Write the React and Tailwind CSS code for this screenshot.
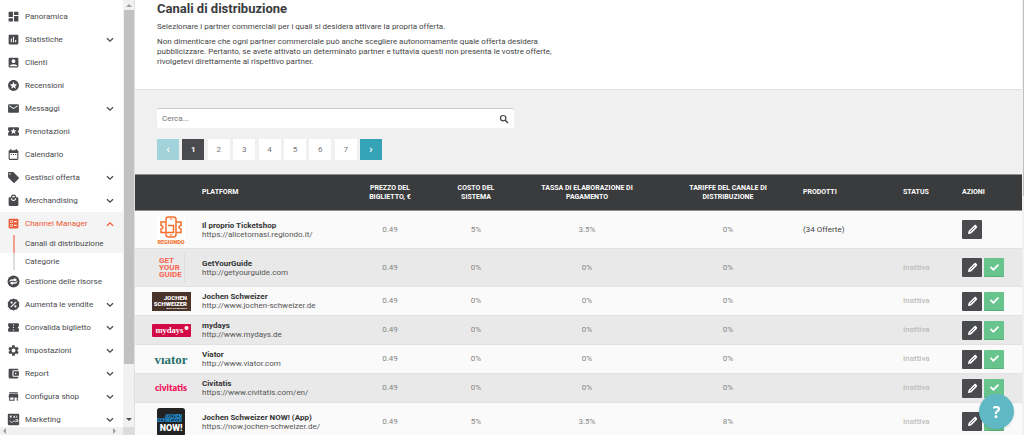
import React from "react";
import clsx from "clsx";
import {
  MdDashboard,
  MdAssessment,
  MdAccountBox,
  MdStars,
  MdEmail,
  MdLocalActivity,
  MdDateRange,
  MdLocalOffer,
  MdLocalMall,
  MdBallot,
  MdConfirmationNumber,
  MdSettings,
  MdAccountBalanceWallet,
  MdStore,
} from "react-icons/md";
import { FaCheck } from "react-icons/fa";

const ResourcesIcon = ({ className }) => (
  <svg viewBox="0 0 24 24" className={className}>
    <circle cx="12" cy="12" r="11" fill="currentColor" />
    <path d="M4.500 13c0-3 2-5 5-5h4V5l5 4.200-5 4V10.800h-4c-2 0-3 .5-5 2.200z" fill="#fff" />
    <path d="M19.500 11c0 3-2 5-5 5h-4v3l-5-4.200 5-4v2.400h4c2 0 3-.5 5-2.200z" fill="#fff" />
    <path d="M7 12h10" stroke="currentColor" strokeWidth="1.200" />
  </svg>
);

const DiscountIcon = ({ className }) => (
  <svg viewBox="0 0 24 24" className={className}>
    <path
      d="M12 .8l3 1.600 3.400.2 1.500 3 2.700 2.200L22.200 12l.4 4.200-2.700 2.200-1.500 3-3.400.2-3 1.600-3-1.600-3.400-.2-1.500-3-2.700-2.200.4-4.200-.4-4.200 2.700-2.200 1.500-3 3.400-.2z"
      fill="currentColor"
    />
    <path d="M7 17L17 7" stroke="#fff" strokeWidth="2" />
    <circle cx="8.500" cy="8.500" r="2" fill="#fff" />
    <circle cx="15.500" cy="15.500" r="2" fill="#fff" />
  </svg>
);

const MarketingIcon = ({ className }) => (
  <svg viewBox="0 0 24 24" className={className}>
    <rect x="1.500" y="1.500" width="21" height="21" rx="2" fill="currentColor" />
    <path d="M5 6h4M7 4.500v5M12 5l3 4M15 5l-3 4M18 5v4M5 14l4 4 4-4 3 3 4-4M15.500 12.500H20V17" fill="none" stroke="#fff" strokeWidth="1.500" />
  </svg>
);

const Chevron = ({ up }) => (
  <svg viewBox="0 0 8 6" className={clsx("w-2 h-1.5 shrink-0", up && "rotate-180")}>
    <path d="M1 1.200l3 3 3-3" fill="none" stroke="currentColor" strokeWidth="1.300" />
  </svg>
);

const PencilIcon = () => (
  <svg viewBox="0 0 24 24" className="w-[11px] h-[11px]">
    <path d="M2 22l1.500-7L15.500 3c1.500-1.500 3-1.500 4.200-.2l1.500 1.500c1.300 1.200 1.300 2.700-.2 4.200L9 20.500z" fill="#fff" />
    <path d="M7 17L17 7" stroke="#4a4b4f" strokeWidth="1.800" />
  </svg>
);

const menuBefore = [
  { label: "Panoramica", icon: MdDashboard },
  { label: "Statistiche", icon: MdAssessment, more: true },
  { label: "Clienti", icon: MdAccountBox },
  { label: "Recensioni", icon: MdStars },
  { label: "Messaggi", icon: MdEmail, more: true },
  { label: "Prenotazioni", icon: MdLocalActivity },
  { label: "Calendario", icon: MdDateRange },
  { label: "Gestisci offerta", icon: MdLocalOffer, more: true },
  { label: "Merchandising", icon: MdLocalMall, more: true },
];

const menuAfter = [
  { label: "Gestione delle risorse", icon: ResourcesIcon },
  { label: "Aumenta le vendite", icon: DiscountIcon, more: true },
  { label: "Convalida biglietto", icon: MdConfirmationNumber, more: true },
  { label: "Impostazioni", icon: MdSettings, more: true },
  { label: "Report", icon: MdAccountBalanceWallet, more: true },
  { label: "Configura shop", icon: MdStore, more: true },
  { label: "Marketing", icon: MarketingIcon, more: true },
];

const MenuItem = ({ label, icon: Icon, more, active }) => (
  <a
    href="#"
    className={clsx(
      "flex items-center h-[23px] pl-[7px] pr-[9px]",
      active ? "text-[#ee5a36]" : "text-[#48494c]"
    )}
  >
    <Icon className="w-[13px] h-[13px] shrink-0 mr-[5px]" />
    <span className="flex-1 whitespace-nowrap">{label}</span>
    {more && <Chevron up={active} />}
  </a>
);

const Sidebar = () => (
  <aside className="flex h-full shrink-0 border-r border-[#e0e0e0]">
    <div className="flex flex-col w-[123px]">
      <nav className="flex-1 overflow-hidden pt-[5px] text-[8px]">
        {menuBefore.map((item) => (
          <MenuItem key={item.label} {...item} />
        ))}
        <div className="bg-[#f4f4f4]">
          <MenuItem label="Channel Manager" icon={MdBallot} more active />
        </div>
        <a href="#" className="flex items-center h-[18px] pl-[13px] bg-[#f4f4f4] text-[#48494c]">
          <span className="w-0.5 h-full bg-[#f0a08c] mr-2.5" />
          Canali di distribuzione
        </a>
        <a href="#" className="flex items-center h-[17px] pl-[13px] text-[#48494c]">
          <span className="w-0.5 h-full bg-[#dedede] mr-2.5" />
          Categorie
        </a>
        {menuAfter.map((item) => (
          <MenuItem key={item.label} {...item} />
        ))}
      </nav>
      <div className="flex items-center justify-between h-2 px-0.5 bg-[#f1f1f1] text-[#a0a0a0]">
        <svg viewBox="0 0 4 6" className="w-1 h-1.5"><path d="M4 0v6L1 3z" fill="currentColor" /></svg>
        <svg viewBox="0 0 4 6" className="w-1 h-1.5 mr-1"><path d="M0 0v6l3-3z" fill="currentColor" /></svg>
      </div>
    </div>
    {/* Scrollbar */}
    <div className="flex flex-col items-center w-[11px] bg-[#f1f1f1]">
      <svg viewBox="0 0 6 4" className="w-1.5 h-1 my-[3px] shrink-0"><path d="M0 4h6L3 1z" fill="#a0a0a0" /></svg>
      <div className="w-[10px] basis-[70px] grow-[70] bg-[#c1c1c1]" />
      <div className="basis-[52px] shrink-0" />
      <svg viewBox="0 0 6 4" className="w-1.5 h-1 my-0.5 shrink-0"><path d="M0 0h6L3 3z" fill="#505050" /></svg>
      <div className="w-full h-2 mt-[3px] bg-[#dcdcdc] shrink-0" />
    </div>
  </aside>
);

const RegiondoLogo = () => (
  <svg viewBox="0 0 28 28" className="w-7 h-7 mx-auto">
    <rect width="28" height="28" fill="#fff" />
    <g fill="none" stroke="#f4702c" strokeWidth="1.500">
      <rect x="9" y="1" width="10" height="20" rx="2.500" />
      <path d="M9 6H4v3.500c1.500.3 2 .8 2 1.700s-.5 1.400-2 1.700v3.600h12.500v-7H11M19 6h5v3.500c-1.500.3-2 .8-2 1.700s.5 1.400 2 1.700v3.600h-5" />
      <path d="M12.500 3h3M12.500 19h3" strokeWidth="1" />
    </g>
    <text x="14" y="27.500" textAnchor="middle" fontSize="5.500" fontWeight="900" fontFamily="Roboto, sans-serif" fill="#f4702c">REGIONDO</text>
  </svg>
);

const GetYourGuideLogo = () => (
  <svg viewBox="0 0 28 28" className="w-7 h-7 mx-auto">
    <g fontSize="8" fontWeight="700" fontFamily="Roboto, sans-serif" fill="#fa6450">
      <text x="2" y="9">GET</text>
      <text x="2" y="16">YOUR</text>
      <text x="2" y="23">GUIDE</text>
    </g>
    <path d="M27.500 0v28" stroke="#dcdcdc" />
  </svg>
);

const JochenLogo = () => (
  <svg viewBox="0 0 39 19" className="w-[39px] h-[19px] mx-auto">
    <rect width="39" height="19" fill="#4a3328" />
    <g fontWeight="900" fontFamily="Roboto, sans-serif" fill="#fff" textAnchor="end">
      <text x="35" y="8" fontSize="6">JOCHEN</text>
      <text x="35" y="13.500" fontSize="6">SCHWEIZER</text>
      <text x="35" y="17" fontSize="2.500">WAS DU ERLEBST</text>
    </g>
  </svg>
);

const MydaysLogo = () => (
  <svg viewBox="0 0 39 13" className="w-[39px] h-[13px] mx-auto">
    <rect width="39" height="13" rx="1" fill="#d20a46" />
    <text x="3.500" y="8.500" fontSize="8.500" fontWeight="700" fontFamily="'Liberation Serif', serif" fill="#fff">mydays</text>
    <circle cx="34.500" cy="4" r="2" fill="#fff" />
  </svg>
);

const ViatorLogo = () => (
  <svg viewBox="0 0 39 14" className="w-[39px] h-[14px] mx-auto">
    <text x="19" y="11.500" textAnchor="middle" fontSize="13" fontWeight="700" fontFamily="'Liberation Serif', serif" fill="#28706c">vıator</text>
  </svg>
);

const CivitatisLogo = () => (
  <svg viewBox="0 0 39 14" className="w-[39px] h-[14px] mx-auto">
    <text x="19" y="10" textAnchor="middle" fontSize="9" fontWeight="800" fontFamily="Lato, sans-serif" fill="#f0145a">civitatis</text>
  </svg>
);

const JochenNowLogo = () => (
  <svg viewBox="0 0 28 28" className="w-7 h-7 mx-auto">
    <rect width="28" height="28" rx="2.500" fill="#222" />
    <g fontWeight="900" fontFamily="Roboto, sans-serif" textAnchor="end">
      <text x="25" y="9.500" fontSize="4.500" fill="#1e9ce0">JOCHEN</text>
      <text x="25" y="13.800" fontSize="4.500" fill="#1e9ce0">SCHWEIZER</text>
      <text x="25.500" y="22.500" fontSize="9" fill="#fff">NOW!</text>
    </g>
  </svg>
);

const platforms = [
  { logo: RegiondoLogo, name: "Il proprio Ticketshop", url: "https://alicetomasi.regiondo.it/", system: "5%", payment: "3.5%", channel: "0%", products: "(34 Offerte)", tall: true },
  { logo: GetYourGuideLogo, name: "GetYourGuide", url: "http://getyourguide.com", system: "0%", payment: "0%", channel: "0%", status: "Inattiva", tall: true },
  { logo: JochenLogo, name: "Jochen Schweizer", url: "http://www.jochen-schweizer.de", system: "0%", payment: "0%", channel: "0%", status: "Inattiva" },
  { logo: MydaysLogo, name: "mydays", url: "http://www.mydays.de", system: "0%", payment: "0%", channel: "0%", status: "Inattiva" },
  { logo: ViatorLogo, name: "Viator", url: "http://www.viator.com", system: "0%", payment: "0%", channel: "0%", status: "Inattiva" },
  { logo: CivitatisLogo, name: "Civitatis", url: "https://www.civitatis.com/en/", system: "0%", payment: "0%", channel: "0%", status: "Inattiva" },
  { logo: JochenNowLogo, name: "Jochen Schweizer NOW! (App)", url: "https://now.jochen-schweizer.de/", system: "5%", payment: "3.5%", channel: "8%", status: "Inattiva", tall: true },
];

const PlatformTable = () => (
  <table className="w-full table-fixed text-[8px] text-[#858585]">
    <colgroup>
      <col className="w-[67px]" />
      <col />
      <col className="w-[88px]" />
      <col className="w-[84px]" />
      <col className="w-[138px]" />
      <col className="w-[144px]" />
      <col className="w-[100px]" />
      <col className="w-[59px]" />
      <col className="w-[63px]" />
    </colgroup>
    <thead className="bg-[#3a3b3d] text-white text-[7px] leading-[9px]">
      <tr className="h-9 border-y border-[#8f8f8f]">
        <th aria-label="Logo" />
        <th className="text-left">PLATFORM</th>
        <th>PREZZO DEL<br />BIGLIETTO, €</th>
        <th>COSTO DEL<br />SISTEMA</th>
        <th>TASSA DI ELABORAZIONE DI<br />PAGAMENTO</th>
        <th>TARIFFE DEL CANALE DI<br />DISTRIBUZIONE</th>
        <th className="text-left pl-[3px]">PRODOTTI</th>
        <th className="text-left pl-[3px]">STATUS</th>
        <th className="text-left pl-[3px]">AZIONI</th>
      </tr>
    </thead>
    <tbody className="text-center">
      {platforms.map(({ logo: Logo, ...row }) => (
        <tr
          key={row.name}
          className={clsx(
            "odd:bg-[#fafafa] even:bg-[#e9e9e9] border-b border-[#e2e2e2]",
            row.tall ? "h-[38px]" : "h-[29px]"
          )}
        >
          <td className="pr-0 pl-[5px]"><Logo /></td>
          <td className="text-left leading-[9px] whitespace-nowrap">
            <div className="font-bold text-[#333]">{row.name}</div>
            <a href={row.url} className="text-[#555]">{row.url}</a>
          </td>
          <td>0.49</td>
          <td>{row.system}</td>
          <td>{row.payment}</td>
          <td>{row.channel}</td>
          <td className="text-left pl-[3px] text-[#444]">{row.products}</td>
          <td className="text-left pl-[3px] font-medium text-[#bdbdbd]">{row.status}</td>
          <td className="pl-[3px]">
            <div className="flex gap-0.5">
              <button aria-label="Modifica" className="flex items-center justify-center w-5 h-[19px] rounded-[1px] bg-[#4a4b4f]">
                <PencilIcon />
              </button>
              {row.status && (
                <button aria-label="Attiva" className="flex items-center justify-center w-5 h-[19px] rounded-[1px] bg-[#68c48d] border-b border-[#57ae7a] text-white">
                  <FaCheck className="w-[9px] h-[9px]" />
                </button>
              )}
            </div>
          </td>
        </tr>
      ))}
    </tbody>
  </table>
);

const pages = [1, 2, 3, 4, 5, 6, 7];

const Pagination = () => (
  <div className="flex justify-between w-[225px] mt-[11px] text-[8px] text-[#777]">
    <button aria-label="Precedente" className="w-[22px] h-[21px] bg-[#a3d3da] text-white text-[11px] leading-none font-bold">‹</button>
    {pages.map((page) => (
      <button
        key={page}
        className={clsx("w-[22px] h-[21px]", page === 1 ? "bg-[#4a4b4f] text-white font-bold" : "bg-white")}
      >
        {page}
      </button>
    ))}
    <button aria-label="Successiva" className="w-[22px] h-[21px] bg-[#35a3b7] text-white text-[11px] leading-none font-bold">›</button>
  </div>
);

const App = () => (
  <div className="flex h-screen overflow-hidden bg-white font-[Roboto,sans-serif] text-[#444]">
    <Sidebar />
    <main className="flex-1 min-w-0 overflow-hidden bg-[#f0f0f0]">
      <section className="bg-white border-b border-[#e0e0e0] pl-[22px] pb-[22px] text-[8px] leading-[10px]">
        <h1 className="text-[13px] leading-[17px] font-bold text-[#3a3b3d]">Canali di distribuzione</h1>
        <p className="mt-[5px]">Selezionare i partner commerciali per i quali si desidera attivare la propria offerta.</p>
        <p className="mt-[5px] max-w-[408px]">
          Non dimenticare che ogni partner commerciale può anche scegliere autonomamente quale offerta desidera
          pubblicizzare. Pertanto, se avete attivato un determinato partner e tuttavia questi non presenta le vostre
          offerte, rivolgetevi direttamente al rispettivo partner.
        </p>
      </section>
      <section className="pl-[22px] pt-[18px] pb-[14px]">
        <div className="flex items-center w-full max-w-[357px] h-5 px-[5px] rounded-xs bg-white border-t border-[#ccc]">
          <input type="text" aria-label="Cerca" placeholder="Cerca..." className="flex-1 text-[8px] outline-none placeholder:text-[#777]" />
          <svg viewBox="0 0 10 10" className="w-2.5 h-2.5 text-[#444]">
            <circle cx="4.200" cy="4.200" r="2.700" fill="none" stroke="currentColor" strokeWidth="1.200" />
            <path d="M6.200 6.200L9 9" stroke="currentColor" strokeWidth="1.500" />
          </svg>
        </div>
        <Pagination />
      </section>
      <PlatformTable />
    </main>
    {/* Page scrollbar */}
    <div className="flex flex-col w-0.5 shrink-0 pl-px bg-[#f0f0f0]">
      <div className="h-[45%] bg-[#c1c1c1]" />
    </div>
    <button
      aria-label="Aiuto"
      className="fixed right-[10px] bottom-[6px] w-[35px] h-[35px] rounded-full bg-[#60b8c5] shadow text-white text-base font-bold font-['Open_Sans',sans-serif]"
    >
      ?
    </button>
  </div>
);

export default App;
